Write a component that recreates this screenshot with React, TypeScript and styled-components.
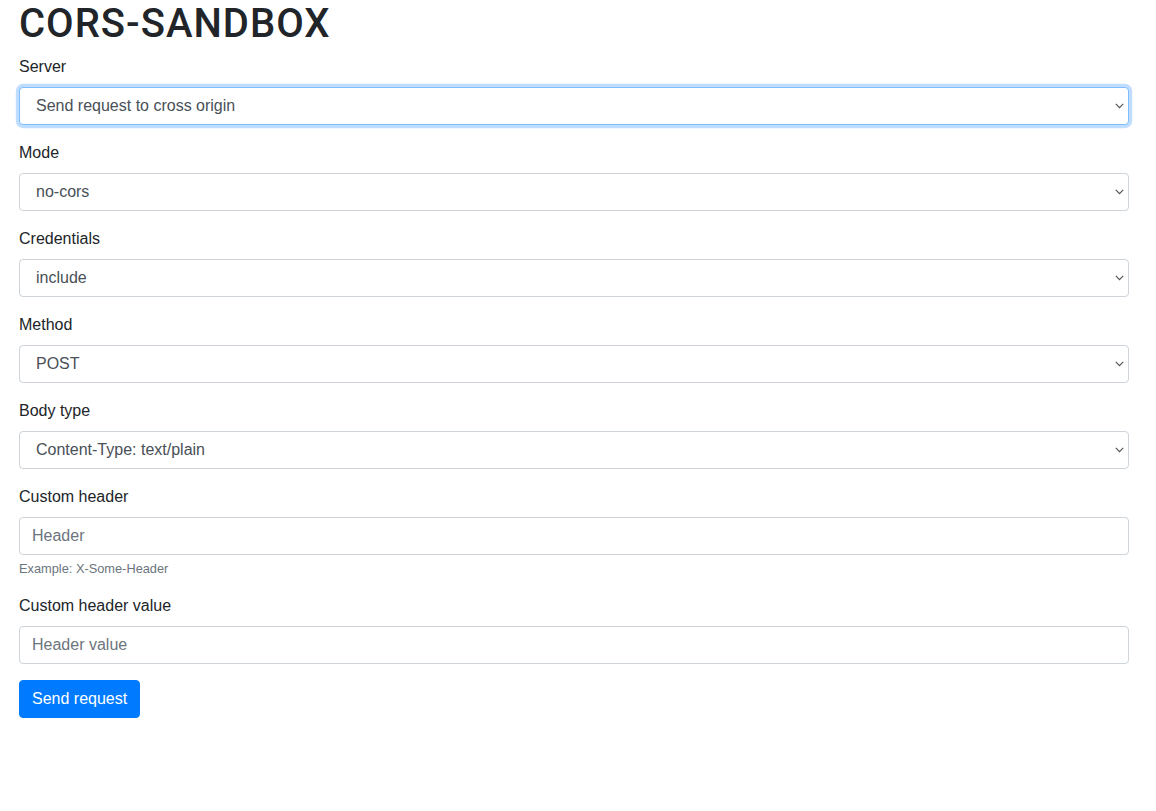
import React from "react";
import styled, { createGlobalStyle } from "styled-components";

const Global = createGlobalStyle`
  html, body { margin: 0; padding: 0; background: #fff; }
  body {
    font-family: "Liberation Sans", Arial, sans-serif;
    font-size: 16px;
    line-height: 1.5;
    color: #212529;
  }
  * { box-sizing: border-box; }
`;

const Container = styled.div`
  width: 1110px;
  margin-left: 19px;
`;

const Title = styled.h1`
  margin: 0 0 7px;
  font-family: Roboto, "Liberation Sans", Arial, sans-serif;
  font-size: 40px;
  font-weight: 500;
  line-height: 48px;
  letter-spacing: 1px;
`;

const Group = styled.div`
  margin-bottom: 16px;
  display: flex;
  flex-direction: column;
`;

const Label = styled.label`
  display: block;
  margin-bottom: 8px;
  font-size: 16px;
  line-height: 24px;
`;

const SelectWrap = styled.div`
  position: relative;
  height: 38px;
`;

const Select = styled.select<{ $focus?: boolean }>`
  appearance: none;
  -webkit-appearance: none;
  width: 100%;
  height: 38px;
  padding: 6px 30px 6px 16px;
  font-family: inherit;
  font-size: 16px;
  line-height: 24px;
  color: #495057;
  background: #fff;
  border: 1px solid ${(p) => (p.$focus ? "#80bdff" : "#ced4da")};
  border-radius: 4px;
  box-shadow: ${(p) => (p.$focus ? "0 0 0 3.2px rgba(0,123,255,.25)" : "none")};
  outline: none;
`;

const Chevron = styled.svg`
  position: absolute;
  right: 5px;
  top: 16px;
  width: 9px;
  height: 6px;
  pointer-events: none;
`;

const Input = styled.input`
  width: 100%;
  height: 38px;
  padding: 6px 12px;
  font-family: inherit;
  font-size: 16px;
  line-height: 24px;
  color: #495057;
  background: #fff;
  border: 1px solid #ced4da;
  border-radius: 4px;
  outline: none;
  &::placeholder { color: #6c757d; opacity: 1; }
`;

const Help = styled.small`
  display: block;
  margin-top: 4px;
  font-size: 12.8px;
  line-height: 19.2px;
  color: #6c757d;
`;

const Button = styled.button`
  height: 38px;
  padding: 6px 12px;
  font-family: inherit;
  font-size: 16px;
  line-height: 24px;
  color: #fff;
  background: #007bff;
  border: 1px solid #007bff;
  border-radius: 4px;
  cursor: pointer;
`;

const SelectField = ({
  label,
  value,
  focus,
}: {
  label: string;
  value: string;
  focus?: boolean;
}) => (
  <Group>
    <Label>{label}</Label>
    <SelectWrap>
      <Select $focus={focus} defaultValue={value}>
        <option value={value}>{value}</option>
      </Select>
      <Chevron viewBox="0 0 9 6">
        <path d="M0.8 0.8 L4.5 4.6 L8.2 0.8" fill="none" stroke="#555" strokeWidth="1.2" />
      </Chevron>
    </SelectWrap>
  </Group>
);

export default function App() {
  return (
    <>
      <Global />
      <Container>
        <Title>CORS-SANDBOX</Title>
        <SelectField label="Server" value="Send request to cross origin" focus />
        <SelectField label="Mode" value="no-cors" />
        <SelectField label="Credentials" value="include" />
        <SelectField label="Method" value="POST" />
        <SelectField label="Body type" value="Content-Type: text/plain" />
        <Group>
          <Label>Custom header</Label>
          <Input placeholder="Header" />
          <Help>Example: X-Some-Header</Help>
        </Group>
        <Group>
          <Label>Custom header value</Label>
          <Input placeholder="Header value" />
        </Group>
        <Button>Send request</Button>
      </Container>
    </>
  );
}
